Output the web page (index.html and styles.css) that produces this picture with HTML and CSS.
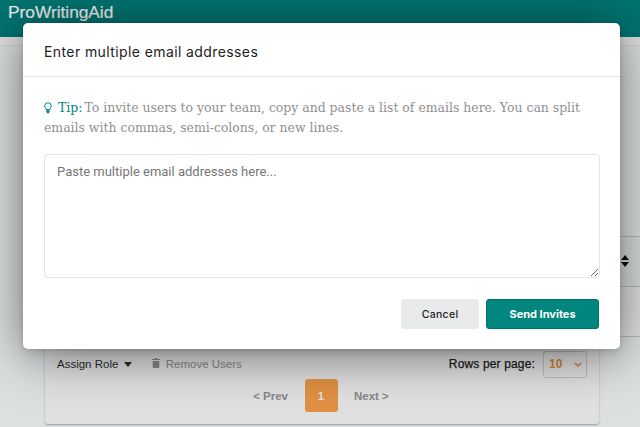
FILE: index.html
```html
<!DOCTYPE html>
<html lang="en">
<head>
<meta charset="utf-8">
<title>Enter multiple email addresses</title>
<link rel="stylesheet" href="styles.css">
</head>
<body>
<div class="page">
  <header class="topbar"><span class="brand">ProWritingAid</span></header>
  <div class="subbar"></div>
  <main class="content">
    <section class="card">
      <div class="rows">
        <div class="row band-a">
          <svg class="sort" viewBox="0 0 8 12" width="8" height="12"><path d="M4 0l4 5H0zM4 12L0 7h8z"/></svg>
        </div>
        <div class="row band-b"></div>
        <div class="row band-c"></div>
      </div>
      <div class="actions">
        <div class="left-actions">
          <span class="assign">Assign Role <svg class="caret" viewBox="0 0 8 5" width="8" height="5"><path d="M0 0h8L4 5z"/></svg></span>
          <span class="remove">
            <svg class="trash" viewBox="0 0 8 10" width="8" height="10"><path d="M3 0h2l.5 1H8v1H0V1h2.500zM.7 3h6.600v6.200a.8.8 0 0 1-.8.800h-5a.8.8 0 0 1-.8-.8z"/></svg>
            Remove Users</span>
        </div>
        <div class="rows-per">
          <span class="rows-label">Rows per page:</span>
          <span class="select">10
            <svg class="chev" viewBox="0 0 8 5" width="8" height="5"><path d="M.7.7L4 4l3.300-3.300" fill="none" stroke="currentColor" stroke-width="1.400"/></svg>
          </span>
        </div>
      </div>
      <nav class="pager">
        <span class="pg">&lt; Prev</span>
        <span class="cur">1</span>
        <span class="pg">Next &gt;</span>
      </nav>
    </section>
  </main>
  <div class="backdrop"></div>
  <div class="modal">
    <div class="modal-head">Enter multiple email addresses</div>
    <div class="modal-body">
      <div class="tip">
        <div class="tip-line"><svg class="bulb" viewBox="0 0 8 12" width="8" height="12"><path d="M4 .7a3.300 3.300 0 0 0-3.300 3.300c0 1.500 1.100 2.200 1.500 3.500h3.600c.4-1.300 1.500-2 1.500-3.500A3.300 3.300 0 0 0 4 .7z" fill="none" stroke="currentColor"/><path d="M2.300 8.300h3.400v1.500L4.800 11.300H3.200L2.300 9.800z" fill="currentColor"/></svg><span class="tip-word">Tip:</span><span>To invite users to your team, copy and paste a list of emails here. You can split</span></div>
        <div class="tip-line">emails with commas, semi-colons, or new lines.</div>
      </div>
      <textarea class="emails" placeholder="Paste multiple email addresses here..."></textarea>
    </div>
    <div class="modal-foot">
      <button class="btn cancel">Cancel</button>
      <button class="btn send">Send Invites</button>
    </div>
  </div>
</div>
</body>
</html>
```
FILE: styles.css
```css
* { box-sizing: border-box; }
html, body { margin: 0; height: 100%; overflow: hidden; }
body { font-family: "Liberation Sans", Arial, sans-serif; background: #fbffff; }
.page { position: relative; width: 640px; height: 427px; overflow: hidden; }
.topbar { height: 37px; background: #008480; padding-left: 8px; }
.brand { display: block; position: relative; z-index: 1; color: #ececec; font-size: 17.300px; line-height: 25px; -webkit-text-stroke: .2px #ececec; }
.subbar { height: 9px; background: #fff; border-bottom: 1px solid #f1f1f1; }
.content { height: 381px; display: flex; flex-direction: column; justify-content: flex-end; padding: 0 41px 3px 45px; }
.card { width: 554px; background: #fff; border-radius: 3px; box-shadow: 0 1px 2px rgba(0,0,0,.3); }
.row { border-top: 1px solid #d4d4d4; display: flex; align-items: center; justify-content: flex-end; }
.band-a { width: 595px; height: 50px; background: #f6fcfc; padding-right: 11px; }
.band-b { width: 595px; height: 51px; background: #fff; border-bottom: 1px solid #d4d4d4; }
.band-c { height: 13px; border-top: 0; }
.sort { fill: #111; margin-bottom: 2px; }
.actions { display: flex; justify-content: space-between; align-items: center; height: 29px; padding: 0 12px 1px; }
.left-actions { display: flex; gap: 20px; font-size: 11.500px; margin-bottom: 1px; }
.assign { color: #333; }
.caret { fill: #333; margin: 0 0 1px 2px; }
.remove { color: #9a9a9a; }
.trash { fill: #9a9a9a; margin-right: 3px; }
.rows-per { display: flex; align-items: center; gap: 8px; }
.rows-label { font-size: 12px; letter-spacing: .15px; color: #222; -webkit-text-stroke: .25px #222; margin-bottom: 1px; }
.select { display: flex; justify-content: space-between; align-items: center; width: 44px; height: 27px; padding: 0 4px 0 5px; border: 1px solid #d8d8d8; border-radius: 3px; font-size: 12px; font-weight: 700; color: #f29436; }
.pager { display: flex; justify-content: center; align-items: center; gap: 16.500px; height: 33px; margin: 0 2px 12px 0; font-size: 11.500px; font-weight: 700; }
.pg { color: #999; }
.cur { width: 33px; height: 33px; display: flex; align-items: center; justify-content: center; background: #ffa64d; border-radius: 3px; color: #fff; }
.backdrop { position: absolute; inset: 0; background: rgba(0,0,0,.12); }
.modal { position: absolute; left: 23px; top: 23px; z-index: 2; width: 597px; height: 326px; background: #fff; border-radius: 5px; box-shadow: 0 6px 50px rgba(0,0,0,.52), 0 2px 6px rgba(0,0,0,.15); display: flex; flex-direction: column; }
.modal-head { height: 54px; border-bottom: 1px solid #e3e5e5; padding: 3px 21px 0; display: flex; align-items: center; font-family: "Inter", sans-serif; font-size: 14px; letter-spacing: .4px; color: #222; }
.modal-body { padding: 21px 21px 0; }
.tip { margin: 0 0 16px; font-family: "DejaVu Serif", serif; font-size: 12.450px; line-height: 20px; color: #8f8f8f; }
.tip-line { white-space: nowrap; display: flex; align-items: center; }
.tip-word { color: #00857f; margin: 0 2px 0 6px; }
.bulb { color: #00857f; }
.emails { display: block; width: 556px; height: 124px; padding: 9px 12px; border: 1px solid #e4e4e4; border-radius: 4px; font-family: "Roboto", sans-serif; font-size: 13px; resize: both; outline: none; }
.emails::placeholder { color: #777; }
.modal-foot { display: flex; justify-content: flex-end; gap: 7px; padding: 21px 21px 0; }
.btn { height: 30px; border-radius: 3px; border: 0; font-family: "Inter", sans-serif; font-size: 11px; padding: 0; }
.cancel { width: 78px; background: #e9ebeb; color: #222; font-size: 10.500px; font-weight: 500; letter-spacing: .3px; }
.send { width: 113px; background: #00857f; color: #fff; font-weight: 700; border: 1px solid #00706b; }
```
